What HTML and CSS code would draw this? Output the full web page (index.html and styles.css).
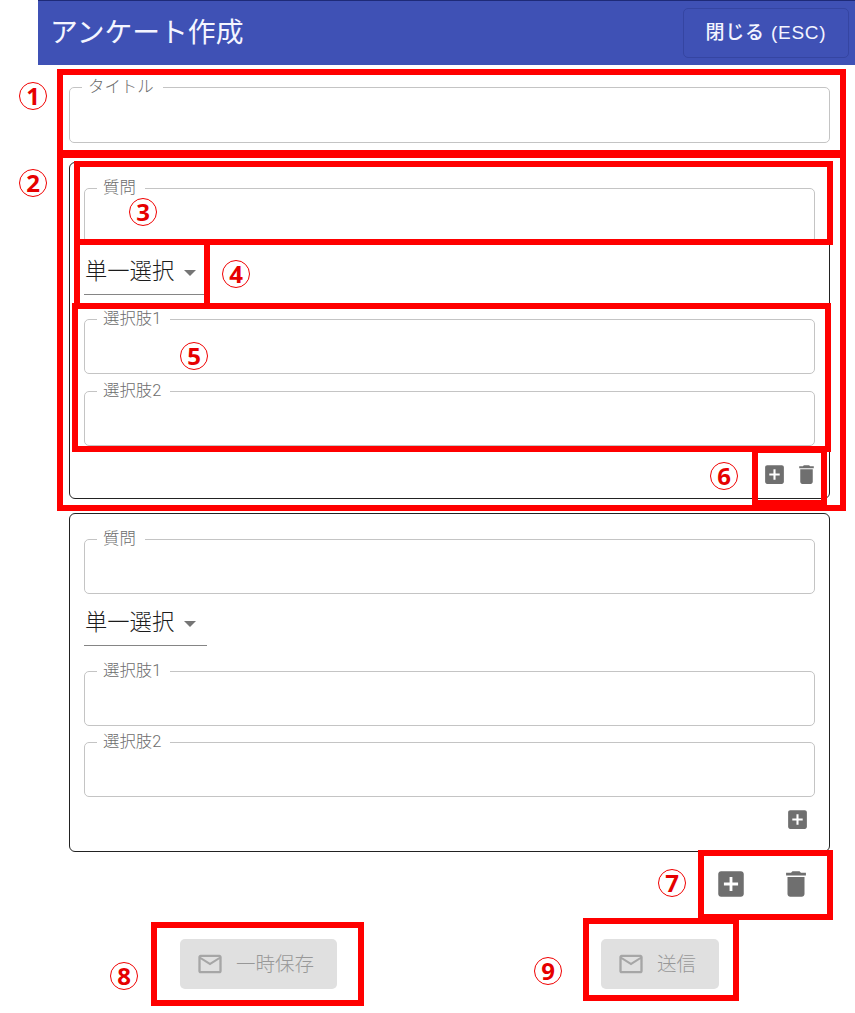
FILE: index.html
```html
<!DOCTYPE html>
<html lang="ja">
<head>
<meta charset="utf-8">
<title>アンケート作成</title>
<link rel="stylesheet" href="styles.css">
</head>
<body>
<svg class="symbols" aria-hidden="true">
  <symbol id="add" viewBox="0 0 24 24"><path d="M19 3H5c-1.11 0-2 .9-2 2v14c0 1.1.89 2 2 2h14c1.1 0 2-.9 2-2V5c0-1.1-.9-2-2-2zm-2 10h-4v4h-2v-4H7v-2h4V7h2v4h4v2z"/></symbol>
  <symbol id="trash" viewBox="0 0 24 24"><path d="M6 19c0 1.1.9 2 2 2h8c1.1 0 2-.9 2-2V7H6v12zM19 4h-3.500l-1-1h-5l-1 1H5v2h14V4z"/></symbol>
  <symbol id="mail" viewBox="0 0 24 24"><path d="M20 4H4c-1.100 0-1.990.9-1.990 2L2 18c0 1.100.9 2 2 2h16c1.100 0 2-.9 2-2V6c0-1.100-.9-2-2-2zm0 14H4V8l8 5 8-5v10zm-8-7L4 6h16l-8 5z"/></symbol>
</svg>
<div class="page">
  <div class="dialog">
    <header class="bar">
      <h1 class="bar-title">アンケート作成</h1>
      <button class="close">閉じる (ESC)</button>
    </header>
    <main class="content">
      <fieldset class="field"><legend>タイトル</legend></fieldset>

      <section class="card card-first">
        <fieldset class="field"><legend>質問</legend></fieldset>
        <div class="select"><span>単一選択</span><i class="arrow"></i></div>
        <fieldset class="field"><legend>選択肢1</legend></fieldset>
        <fieldset class="field field-next"><legend>選択肢2</legend></fieldset>
        <div class="card-actions">
          <svg class="icon"><use href="#add"/></svg>
          <svg class="icon"><use href="#trash"/></svg>
        </div>
      </section>

      <section class="card card-second">
        <fieldset class="field"><legend>質問</legend></fieldset>
        <div class="select"><span>単一選択</span><i class="arrow"></i></div>
        <fieldset class="field"><legend>選択肢1</legend></fieldset>
        <fieldset class="field field-next"><legend>選択肢2</legend></fieldset>
        <div class="card-actions">
          <svg class="icon"><use href="#add"/></svg>
        </div>
      </section>

      <div class="form-actions">
        <svg class="icon-large"><use href="#add"/></svg>
        <svg class="icon-large"><use href="#trash"/></svg>
      </div>
      <footer class="footer">
        <button class="action" disabled><svg class="mail"><use href="#mail"/></svg><span class="action-text">一時保存</span></button>
        <button class="action" disabled><svg class="mail"><use href="#mail"/></svg><span class="action-text">送信</span></button>
      </footer>
    </main>
  </div>

  <div class="mark mark-1"></div>
  <div class="mark mark-2"></div>
  <div class="mark mark-3"></div>
  <div class="mark mark-4"></div>
  <div class="mark mark-5"></div>
  <div class="mark mark-6"></div>
  <div class="mark mark-7"></div>
  <div class="mark mark-8"></div>
  <div class="mark mark-9"></div>
  <span class="num num-1">1</span>
  <span class="num num-2">2</span>
  <span class="num num-3">3</span>
  <span class="num num-4">4</span>
  <span class="num num-5">5</span>
  <span class="num num-6">6</span>
  <span class="num num-7">7</span>
  <span class="num num-8">8</span>
  <span class="num num-9">9</span>
</div>
</body>
</html>
```
FILE: styles.css
```css
* { box-sizing: border-box; }
body { margin: 0; background: #fff; font-family: Roboto, "Noto Sans CJK JP", sans-serif; }
.symbols { display: none; }
.page { position: relative; width: 855px; height: 1013px; overflow: hidden; }
.dialog { margin-left: 38px; }

.bar {
  display: flex; align-items: center; justify-content: space-between;
  height: 65px; padding: 0 6px 0 12px;
  background: #3f51b5; border-top: 1px solid #1e2a78; color: #fff;
}
.bar-title { margin: 0; font-size: 27.800px; font-weight: 400; line-height: 40px; color: #f4f5ff; }
.close {
  width: 166px; height: 50px; margin-bottom: 1px; padding: 0 0 4px;
  border: 1px solid #3545a2; border-radius: 5px; background: none;
  color: #f4f5ff; font-family: "Liberation Sans", "Noto Sans CJK JP", sans-serif;
  font-size: 19px; font-weight: 500; letter-spacing: .75px; white-space: nowrap;
}

.content { padding: 22px 25px 0 31px; }
.field {
  display: block; min-width: 0; height: 55px; margin: 0; padding: 0 0 0 12px;
  border: 1px solid #c4c4c4; border-radius: 5px;
}
.field legend {
  height: 1px; padding: 0 9px 0 6px; line-height: 0;
  font-size: 16.400px; font-weight: 300; color: #6c6c6c; white-space: nowrap;
}
.content > .field { height: 56px; }
.card { border: 1px solid #222; border-radius: 6px; padding: 25px 14px 0; }
.card-first { height: 337px; margin-top: 19px; }
.card-second { height: 339px; margin-top: 14px; }
.select {
  display: flex; align-items: center; gap: 10px;
  width: 123px; height: 41px; margin: 11px 0 25px; padding: 0 0 7px 1px;
  border-bottom: 1px solid #858585;
  color: #1c1c1c; font-size: 22.300px; font-weight: 300; line-height: 30px; white-space: nowrap;
}
.card-first .select { margin-bottom: 24px; }
.arrow { border: 6.500px solid transparent; border-top-color: #757575; border-bottom: 0; margin-top: 5px; }
.field-next { margin-top: 17px; }
.card-second .field-next { margin-top: 16px; }
.card-actions { display: flex; justify-content: flex-end; gap: 7px; padding-right: 5px; margin-top: 16px; }
.card-first .card-actions { padding-right: 0; margin-right: -4px; }
.icon, .icon-large { display: block; fill: #6f6f6f; }
.icon { width: 25px; height: 25px; }
.icon-large { width: 34px; height: 34px; }
.card-second .card-actions { margin-top: 10px; }
.form-actions { display: flex; justify-content: flex-end; gap: 31px; padding: 15px 17px 0 0; }
.footer { display: flex; justify-content: space-between; padding: 38px 111px 0 111px; }
.action {
  display: flex; align-items: center; gap: 12px; height: 50px; padding: 0 23px 0 16px;
  border: 0; border-radius: 5px; background: #e0e0e0; color: #989898;
  font: 300 19.500px Roboto, "Noto Sans CJK JP", sans-serif; white-space: nowrap;
}
.action-text { padding-bottom: 4px; }
.mail { width: 28px; height: 28px; fill: #a6a6a6; }

/* Numbered callouts laid over the form */
.mark { position: absolute; border: 6px solid #f00; }
.mark-1 { left: 57px; top: 69px; width: 789px; height: 87px; }
.mark-2 { left: 57px; top: 152px; width: 789px; height: 359px; }
.mark-3 { left: 74px; top: 161px; width: 759px; height: 84px; }
.mark-4 { left: 74px; top: 239px; width: 136px; height: 70px; }
.mark-5 { left: 72px; top: 303px; width: 759px; height: 149px; }
.mark-6 { left: 752px; top: 447px; width: 75px; height: 59px; }
.mark-7 { left: 698px; top: 850px; width: 135px; height: 70px; }
.mark-8 { left: 151px; top: 922px; width: 213px; height: 84px; }
.mark-9 { left: 583px; top: 918px; width: 156px; height: 83px; }
.num {
  position: absolute; display: flex; align-items: center; justify-content: center;
  width: 28px; height: 28px; padding-bottom: 1px; border: 1px solid #f00000; border-radius: 50%;
  color: #e60000; font: 700 24px/25px "Open Sans", sans-serif;
}
.card-first { padding-top: 25px; }
.num-1 { left: 19px; top: 82px; }
.num-2 { left: 19px; top: 169px; }
.num-3 { left: 129px; top: 198px; }
.num-4 { left: 222px; top: 260px; }
.num-5 { left: 180px; top: 342px; }
.num-6 { left: 710px; top: 462px; }
.num-7 { left: 658px; top: 869px; }
.num-8 { left: 110px; top: 962px; }
.num-9 { left: 534px; top: 957px; }
```
